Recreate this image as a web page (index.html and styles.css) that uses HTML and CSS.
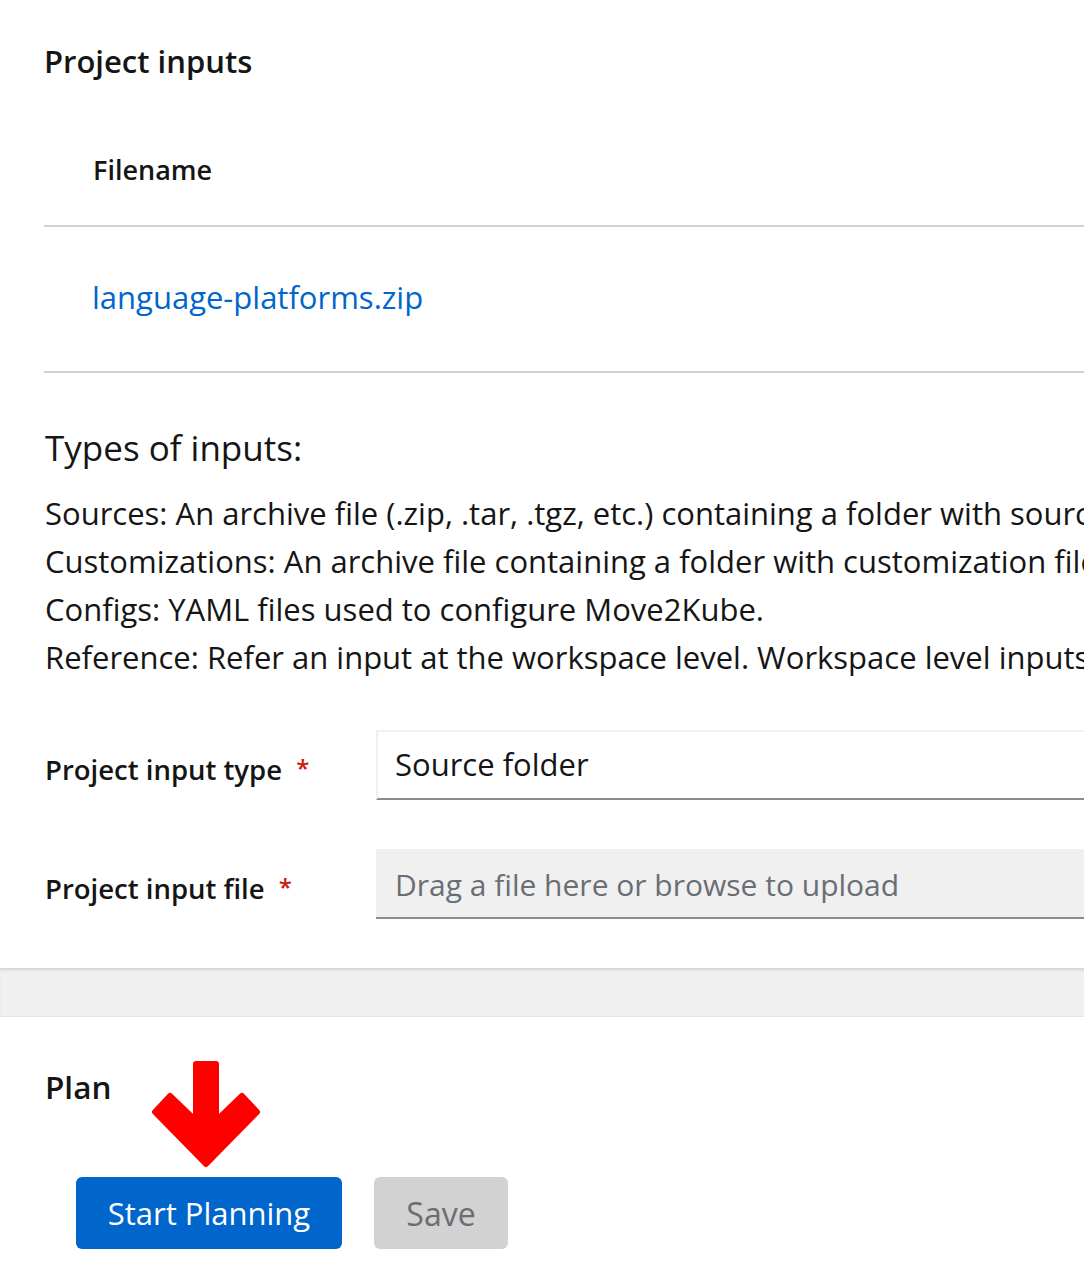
FILE: index.html
```html
<!DOCTYPE html>
<html lang="en">
<head>
<meta charset="utf-8">
<title>Project inputs</title>
<link rel="stylesheet" href="styles.css">
</head>
<body>
<main class="page">
  <section class="inputs">
    <h2 class="section-title">Project inputs</h2>
    <table class="files">
      <thead>
        <tr><th>Filename</th></tr>
      </thead>
      <tbody>
        <tr><td><a href="#" class="file-link">language-platforms.zip</a></td></tr>
      </tbody>
    </table>

    <h3 class="types-title">Types of inputs:</h3>
    <div class="types">
      <p>Sources: An archive file (.zip, .tar, .tgz, etc.) containing a folder with source code files.</p>
      <p>Customizations: An archive file containing a folder with customization files.</p>
      <p>Configs: YAML files used to configure Move2Kube.</p>
      <p>Reference: Refer an input at the workspace level. Workspace level inputs are available to all projects.</p>
    </div>

    <form class="form">
      <div class="form-row">
        <label class="form-label">Project input type <span class="req">*</span></label>
        <div class="control select">Source folder</div>
      </div>
      <div class="form-row">
        <label class="form-label">Project input file <span class="req">*</span></label>
        <div class="control upload">Drag a file here or browse to upload</div>
      </div>
    </form>
  </section>

  <div class="divider-band"></div>

  <section class="plan">
    <h2 class="plan-title">Plan</h2>
    <div class="actions">
      <button class="btn primary" type="button">Start Planning</button>
      <button class="btn disabled" type="button">Save</button>
    </div>
  </section>

  <svg class="arrow" width="118" height="114" viewBox="148 1058 118 114" aria-hidden="true">
    <polygon points="196,1064 216,1064 216,1121 242,1096 257,1112 206,1164 155,1112 170,1096 196,1121" fill="#ff0000" stroke="#ff0000" stroke-width="6" stroke-linejoin="round"/>
  </svg>
</main>
</body>
</html>
```

FILE: styles.css
```css
html, body {
  margin: 0;
  padding: 0;
  background: #ffffff;
  overflow: hidden;
}

body {
  font-family: "Open Sans", "Noto Sans", "Liberation Sans", sans-serif;
  color: #151515;
}

.page {
  position: relative;
  width: 1400px;
}

.inputs {
  padding-left: 44px;
}

.section-title {
  margin: 0;
  padding-top: 40px;
  font-size: 31px;
  font-weight: 600;
  line-height: 42px;
  color: #151515;
}

.files {
  width: 100%;
  border-collapse: collapse;
}

.files th {
  text-align: left;
  font-size: 27px;
  font-weight: 600;
  line-height: 36px;
  padding: 70px 0 37px 49px;
  border-bottom: 2px solid #d2d2d2;
}

.files td {
  font-size: 31px;
  padding: 52px 0 56px 48px;
  line-height: 36px;
  border-bottom: 2px solid #d2d2d2;
}

.file-link {
  color: #0066cc;
  text-decoration: none;
}

.types-title {
  margin: 53px 0 0 1px;
  font-size: 35px;
  font-weight: 500;
  line-height: 44px;
}

.types {
  margin-top: 19px;
  padding-left: 1px;
}

.types p {
  margin: 0;
  font-size: 31px;
  line-height: 48px;
  white-space: nowrap;
}

.form {
  margin-top: 49px;
  display: flex;
  flex-direction: column;
  gap: 49px;
}

.form-row {
  display: flex;
  align-items: flex-start;
}

.form-label {
  width: 332px;
  flex: none;
  padding-left: 1px;
  padding-top: 20px;
  font-size: 27.5px;
  font-weight: 600;
  line-height: 36px;
  box-sizing: border-box;
}

.req {
  color: #c9190b;
  margin-left: 7px;
  font-size: 24px;
  font-weight: 600;
  vertical-align: 3px;
}

.control {
  flex: 1;
  height: 70px;
  box-sizing: border-box;
  padding: 0 0 0 19px;
  font-size: 31px;
  line-height: 66px;
  border-bottom: 2px solid #8a8d90;
  white-space: nowrap;
}

.select {
  background: #ffffff;
  border-top: 2px solid #f0f0f0;
  border-left: 2px solid #f0f0f0;
  line-height: 64px;
  padding-left: 17px;
}

.upload {
  background: #f0f0f0;
  color: #6a6e73;
  font-size: 30px;
  line-height: 72px;
}

.divider-band {
  margin-top: 49px;
  height: 48px;
  background: #f0f0f0;
  box-shadow: inset 0 3px 3px -1px rgba(3, 3, 3, 0.12);
  border-bottom: 1px solid #e4e4e4;
}

.plan {
  padding-left: 45px;
}

.plan-title {
  margin: 0;
  padding-top: 49px;
  font-size: 31.5px;
  font-weight: 600;
  line-height: 42px;
}

.actions {
  display: flex;
  gap: 32px;
  margin-top: 69px;
  padding-left: 31px;
}

.btn {
  height: 72px;
  border: none;
  border-radius: 6px;
  font-family: inherit;
  font-size: 31px;
  padding: 0;
}

.primary {
  background: #0066cc;
  color: #ffffff;
  width: 266px;
}

.disabled {
  background: #d2d2d2;
  color: #6a6e73;
  font-size: 32px;
  width: 134px;
}

.arrow {
  position: absolute;
  left: 148px;
  top: 1058px;
}
```
